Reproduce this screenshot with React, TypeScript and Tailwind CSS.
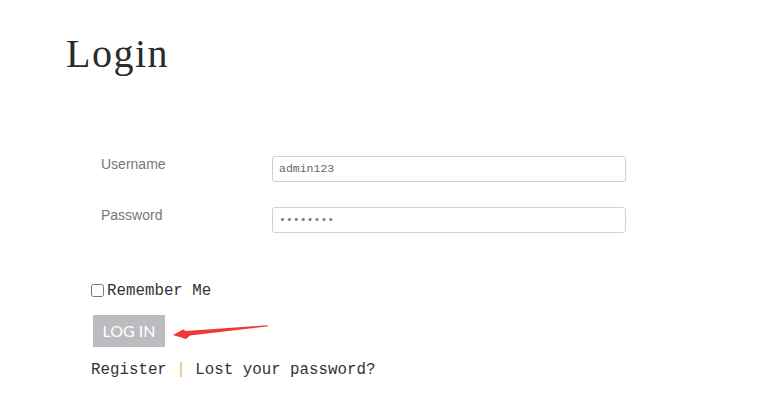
import React from "react";

export default function App() {
  return (
    <div className="relative w-[774px] h-[406px] bg-white overflow-hidden">
      <div className="pl-[66px] pt-[30px]">
        <h1 className="font-['Liberation_Serif',serif] text-[40px] leading-[48px] tracking-[1.5px] text-[#2b2b2b] font-normal">
          Login
        </h1>
      </div>

      <div className="mt-[78px] pl-[101px] flex flex-col gap-[25px]">
        <div className="flex items-start">
          <label className="w-[171px] font-['Liberation_Sans',Arial,sans-serif] text-[14px] leading-[16px] text-[#777]">
            Username
          </label>
          <div className="w-[354px] h-[26px] border border-[#d0d0d0] rounded-[3px] flex items-center pl-[6px] font-['Liberation_Mono',monospace] text-[11.5px] text-[#666]">
            admin123
          </div>
        </div>
        <div className="flex items-start">
          <label className="w-[171px] font-['Liberation_Sans',Arial,sans-serif] text-[14px] leading-[16px] text-[#777]">
            Password
          </label>
          <div className="w-[354px] h-[26px] border border-[#d0d0d0] rounded-[3px] flex items-center pl-[6px] font-['Liberation_Mono',monospace] text-[11.5px] text-[#777]">
            ••••••••
          </div>
        </div>
      </div>

      <div className="pl-[91px] mt-[48px] font-['Liberation_Mono',monospace] text-[15.8px] leading-[20px] text-[#333]">
        <div className="flex items-center gap-[3px]">
          <input type="checkbox" className="w-[13px] h-[13px] m-0 -mt-[2px]" />
          <span>Remember Me</span>
        </div>
        <button className="mt-[14px] ml-[2px] w-[72px] h-[32px] bg-[#bcbcc0] text-white font-['Lato',sans-serif] text-[16px] flex items-center justify-center">
          LOG IN
        </button>
        <div className="mt-[13px] whitespace-pre">
          <span>Register </span>
          <span className="text-[#e8b46a]">|</span>
          <span> Lost your password?</span>
        </div>
      </div>

      <svg className="absolute left-0 top-0 pointer-events-none" width="774" height="406">
        <polygon
          points="173,335 183,329.5 186,331 267,325.3 268.5,326.2 190,335.5 186,339"
          fill="#f03838"
        />
      </svg>
    </div>
  );
}
